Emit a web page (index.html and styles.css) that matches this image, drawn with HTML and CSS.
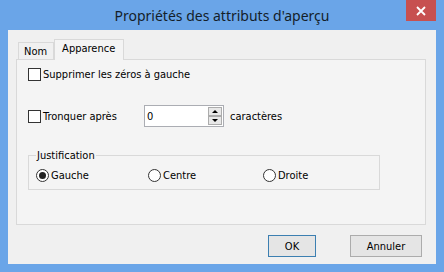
FILE: index.html
```html
<!DOCTYPE html>
<html lang="fr">
<head>
  <meta charset="UTF-8" />
  <title>Propriétés des attributs d'aperçu</title>
  <link rel="stylesheet" href="styles.css">
</head>
<body>
  <div class="window">
    <div class="titlebar">
      <span class="title">Propriétés des attributs d'aperçu</span>
      <button class="close">
        <svg width="10" height="10" viewBox="0 0 10 10"><path d="M1 1 L9 9 M9 1 L1 9" stroke="#fff" stroke-width="1.8"/></svg>
      </button>
    </div>

    <div class="client">
      <div class="tabs">
        <div class="tab">Nom</div>
        <div class="tab active">Apparence</div>
      </div>

      <div class="panel">
        <label class="check"><span class="box"></span>Supprimer les zéros à gauche</label>

        <div class="row">
          <label class="check trunc"><span class="box"></span>Tronquer après</label>
          <div class="spin">
            <span class="value">0</span>
            <span class="arrows">
              <span class="arrow up"></span>
              <span class="arrow down"></span>
            </span>
          </div>
          <span class="unit">caractères</span>
        </div>

        <fieldset class="group">
          <legend>Justification</legend>
          <div class="radios">
            <label class="radio"><span class="circle on"></span>Gauche</label>
            <label class="radio"><span class="circle"></span>Centre</label>
            <label class="radio"><span class="circle"></span>Droite</label>
          </div>
        </fieldset>
      </div>

      <div class="buttons">
        <button class="btn default">OK</button>
        <button class="btn cancel">Annuler</button>
      </div>
    </div>
  </div>
</body>
</html>
```

FILE: styles.css
```css
* {
  box-sizing: border-box;
}

body {
  margin: 0;
  font-family: "DejaVu Sans Condensed", "DejaVu Sans", sans-serif;
  font-size: 11px;
  color: #000;
}

.window {
  width: 444px;
  height: 272px;
  background: #6aa5e8;
  padding: 0 8px 8px 8px;
  display: flex;
  flex-direction: column;
}

.titlebar {
  position: relative;
  height: 30px;
  text-align: center;
}

.title {
  display: inline-block;
  font-family: "Noto Sans", sans-serif;
  font-size: 14px;
  line-height: 20px;
  padding-top: 6px;
  color: #141e2a;
}

.close {
  position: absolute;
  top: 0;
  right: 0;
  width: 30px;
  height: 21px;
  border: none;
  padding: 0;
  background: #c75050;
  display: flex;
  align-items: center;
  justify-content: center;
}

.client {
  flex: 1;
  background: #f0f0f0;
  padding: 9px 10px 0 8px;
  display: flex;
  flex-direction: column;
}

.tabs {
  display: flex;
  align-items: flex-end;
  height: 20px;
  padding-left: 2px;
}

.tab {
  height: 17px;
  padding: 2px 6px 0 5px;
  border: 1px solid #d9d9d9;
  border-bottom: none;
  background: #f0f0f0;
}

.tab.active {
  height: 21px;
  margin-bottom: -1px;
  padding: 2px 8px 0 7px;
  background: #f4f4f4;
  position: relative;
}

.panel {
  height: 166px;
  border: 1px solid #d9d9d9;
  background: #f4f4f4;
  padding: 7px 0 0 11px;
}

.check {
  display: flex;
  align-items: center;
  height: 15px;
}

.box {
  width: 13px;
  height: 13px;
  border: 1px solid #333;
  background: #fff;
  margin-right: 2px;
}

.row {
  display: flex;
  align-items: center;
  margin-top: 23px;
  height: 22px;
}

.trunc {
  width: 116px;
}

.spin {
  width: 80px;
  height: 22px;
  border: 1px solid #abadb3;
  background: #fff;
  display: flex;
  align-items: center;
  justify-content: space-between;
  padding: 0 1px 0 2px;
}

.arrows {
  display: flex;
  flex-direction: column;
  height: 18px;
}

.arrow {
  width: 14px;
  height: 9px;
  border: 1px solid #acacac;
  background: #e8e8e8;
  display: flex;
  align-items: center;
  justify-content: center;
}

.arrow::after {
  content: "";
  border-left: 3px solid transparent;
  border-right: 3px solid transparent;
}

.up::after {
  border-bottom: 3px solid #000;
}

.down::after {
  border-top: 3px solid #000;
}

.unit {
  margin-left: 6px;
}

.group {
  width: 352px;
  margin: 22px 0 0 0;
  border: 1px solid #d9d9d9;
  padding: 0 0 7px 7px;
}

.group legend {
  padding: 0 1px;
  line-height: 13px;
}

.radios {
  display: grid;
  grid-template-columns: 112px 115px auto;
  margin-top: 6px;
}

.radio {
  display: flex;
  align-items: center;
  height: 14px;
}

.circle {
  width: 13px;
  height: 13px;
  border: 1px solid #333;
  border-radius: 50%;
  background: #fff;
  margin-right: 2px;
  display: flex;
  align-items: center;
  justify-content: center;
}

.circle.on::after {
  content: "";
  width: 7px;
  height: 7px;
  border-radius: 50%;
  background: #222;
}

.buttons {
  display: flex;
  justify-content: flex-end;
  gap: 34px;
  margin-top: 10px;
  padding-right: 4px;
}

.btn {
  font-family: inherit;
  font-size: 11px;
  height: 22px;
  border: 1px solid #acacac;
  background: #e5e5e5;
  color: #000;
  padding: 0;
}

.btn.default {
  width: 48px;
  border-color: #3c7fb1;
}

.btn.cancel {
  width: 72px;
}
```
